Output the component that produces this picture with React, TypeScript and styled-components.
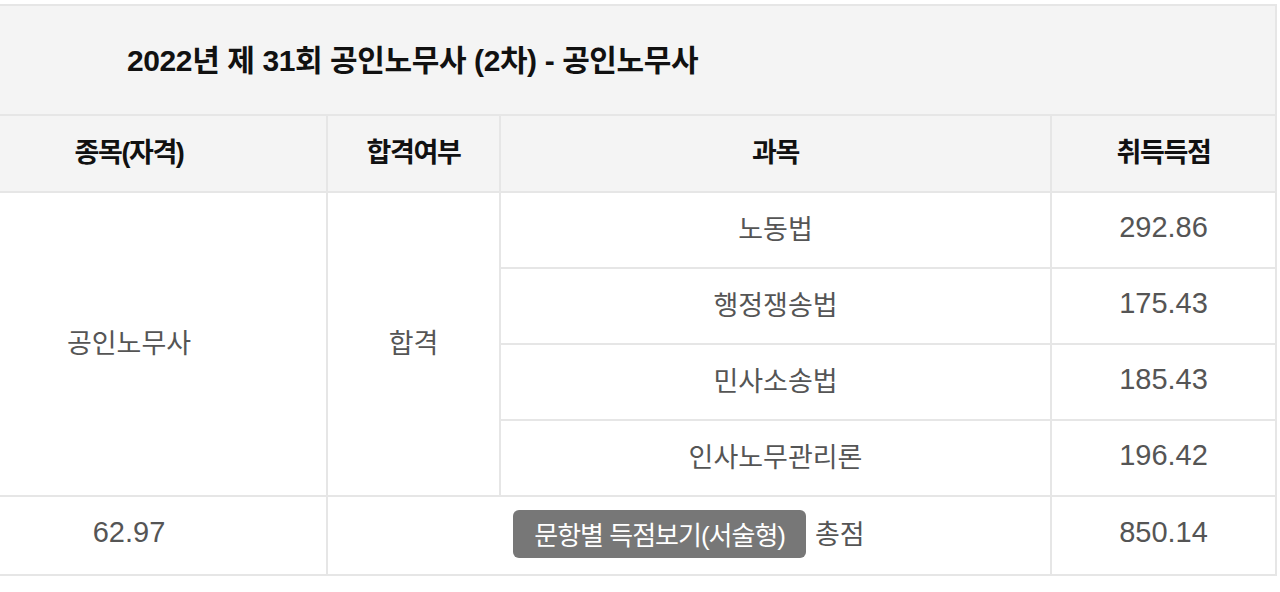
import React from "react";
import styled, { createGlobalStyle } from "styled-components";

const GlobalStyle = createGlobalStyle`
  body {
    margin: 0;
    background: #ffffff;
    font-family: "Liberation Sans", "Noto Sans CJK KR", sans-serif;
  }
`;

const Wrapper = styled.div`
  width: 1280px;
  padding-top: 4px;
  overflow: hidden;
`;

const Table = styled.table`
  width: 1345px;
  margin-left: -70px;
  border-collapse: collapse;
  table-layout: fixed;
`;

const TitleCell = styled.th`
  height: 104px;
  padding: 0 0 4px 195px;
  text-align: left;
  background: #f4f4f4;
  border: 2px solid #e6e6e6;
  font-size: 30px;
  font-weight: 700;
  letter-spacing: -0.4px;
  color: #111111;
`;

const HeadCell = styled.th`
  height: 69px;
  padding: 0 0 6px;
  background: #f4f4f4;
  border: 2px solid #e6e6e6;
  font-size: 27px;
  font-weight: 700;
  letter-spacing: -1.4px;
  color: #111111;
`;

const Cell = styled.td<{ $tall?: boolean }>`
  height: ${({ $tall }) => ($tall ? "71px" : "68px")};
  padding: 0 0 6px;
  text-align: center;
  border: 2px solid #e6e6e6;
  font-size: 27px;
  color: #555555;
`;

const Num = styled.span`
  font-size: 29px;
`;

const TotalBox = styled.div`
  display: flex;
  align-items: center;
  justify-content: center;
  gap: 9px;
`;

const ScoreButton = styled.button`
  height: 48px;
  padding: 0 21px;
  margin-top: 2px;
  border: none;
  border-radius: 6px;
  background: #777777;
  color: #ffffff;
  font-family: "Liberation Sans", "Noto Sans CJK KR", sans-serif;
  font-size: 26px;
  letter-spacing: -1px;
  cursor: pointer;
`;

const subjects = [
  { name: "노동법", score: "292.86" },
  { name: "행정쟁송법", score: "175.43" },
  { name: "민사소송법", score: "185.43" },
  { name: "인사노무관리론", score: "196.42" },
];

const App = () => {
  return (
    <Wrapper>
      <GlobalStyle />
      <Table>
        <colgroup>
          <col style={{ width: 396 }} />
          <col style={{ width: 173 }} />
          <col style={{ width: 551 }} />
          <col style={{ width: 225 }} />
        </colgroup>
        <thead>
          <tr>
            <TitleCell colSpan={4}>2022년 제 31회 공인노무사 (2차) - 공인노무사</TitleCell>
          </tr>
          <tr>
            <HeadCell>종목(자격)</HeadCell>
            <HeadCell>합격여부</HeadCell>
            <HeadCell>과목</HeadCell>
            <HeadCell>취득득점</HeadCell>
          </tr>
        </thead>
        <tbody>
          {subjects.map((s, i) => (
            <tr key={s.name}>
              {i === 0 && (
                <>
                  <Cell rowSpan={4}>공인노무사</Cell>
                  <Cell rowSpan={4}>합격</Cell>
                </>
              )}
              <Cell>{s.name}</Cell>
              <Cell>
                <Num>{s.score}</Num>
              </Cell>
            </tr>
          ))}
          <tr>
            <Cell $tall>
              <Num>62.97</Num>
            </Cell>
            <Cell $tall colSpan={2}>
              <TotalBox>
                <ScoreButton>문항별 득점보기(서술형)</ScoreButton>
                총점
              </TotalBox>
            </Cell>
            <Cell $tall>
              <Num>850.14</Num>
            </Cell>
          </tr>
        </tbody>
      </Table>
    </Wrapper>
  );
};

export default App;
